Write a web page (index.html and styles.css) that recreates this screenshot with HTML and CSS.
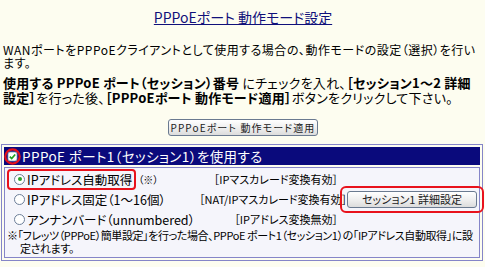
FILE: index.html
```html
<!DOCTYPE html>
<html lang="ja">
<head>
    <meta charset="UTF-8">
    <title>PPPoEポート 動作モード設定</title>
    <link rel="stylesheet" href="styles.css">
</head>
<body>
    <h1 class="page-title"><span>PPPoEポート 動作モード設定</span></h1>

    <p class="intro">WANポートをPPPoEクライアントとして使用する場合の、動作モードの設定（選択）を行います。</p>

    <p class="howto"><b>使用する PPPoE ポート（セッション）番号</b> にチェックを入れ、<b>［セッション1～2 詳細設定］</b>を行った後、<b>［PPPoEポート 動作モード適用］</b>ボタンをクリックして下さい。</p>

    <div class="apply-row">
        <button type="button" class="btn btn-apply">PPPoEポート 動作モード適用</button>
    </div>

    <div class="panel">
        <div class="panel-head">
            <span class="check-ring">
                <svg width="17" height="17" viewBox="0 0 17 17">
                    <circle cx="8.5" cy="8.5" r="7.2" fill="none" stroke="#e8121c" stroke-width="2.2"/>
                    <rect x="4" y="4" width="9" height="9" rx="2" fill="#fff" stroke="#8aa0b8" stroke-width="0.8"/>
                    <path d="M5.8 8.6 L7.7 10.5 L11.2 6.5" fill="none" stroke="#20a020" stroke-width="1.7"/>
                </svg>
            </span>
            <span class="head-text">PPPoE ポート1（セッション1）を使用する</span>
        </div>
        <div class="panel-body">
            <div class="modes">
                <div class="mode">
                    <span class="hilite"><span class="radio on"></span>IPアドレス自動取得</span><span class="mark">（※）</span>
                </div>
                <div class="nat">［IPマスカレード変換有効］</div>
                <div></div>

                <div class="mode">
                    <span class="plain"><span class="radio"></span>IPアドレス固定（1～16個）</span>
                </div>
                <div class="nat">［NAT/IPマスカレード変換有効］</div>
                <div class="detail">
                    <span class="hilite-btn"><button type="button" class="btn btn-detail">セッション1 詳細設定</button></span>
                </div>

                <div class="mode">
                    <span class="plain"><span class="radio"></span>アンナンバード（unnumbered）</span>
                </div>
                <div class="nat">［IPアドレス変換無効］</div>
                <div></div>
            </div>
            <p class="note">※「フレッツ（PPPoE）簡単設定」を行った場合、PPPoE ポート1（セッション1）の「IPアドレス自動取得」に設定されます。</p>
        </div>
    </div>
</body>
</html>
```

FILE: styles.css
```css
body {
    font-family: "Noto Sans CJK JP", sans-serif;
    font-feature-settings: "palt";
    background-color: #fdfdf0;
    color: #000;
    margin: 0;
    padding: 0 2px 0 3px;
    font-size: 12px;
}

.page-title {
    text-align: center;
    font-size: 14px;
    font-weight: normal;
    line-height: 18px;
    margin: 8px 0 0;
    color: #10107a;
}

.page-title span {
    text-decoration: underline;
}

.intro {
    margin: 17px 0 0;
    line-height: 13px;
    letter-spacing: 0.5px;
}

.howto {
    margin: 6px 0 0;
    font-size: 13px;
    line-height: 15px;
    letter-spacing: 0.25px;
}

.apply-row {
    text-align: center;
    margin-top: 13px;
}

.btn {
    font-family: "Noto Sans CJK JP", sans-serif;
    font-feature-settings: "palt";
    font-size: 10px;
    line-height: 13px;
    color: #222;
    white-space: nowrap;
    background: linear-gradient(#ffffff, #ececec 60%, #dcdcdc);
    border: 1px solid #6a7a90;
    border-radius: 3px;
    padding: 1px 0;
}

.btn-apply {
    width: 150px;
    letter-spacing: 1.1px;
}

.panel {
    margin: 8px 0 0 -2px;
    border: 1px solid #8585c8;
    padding: 2px;
    background-color: #fdfdf0;
}

.panel-head {
    display: flex;
    align-items: center;
    height: 18px;
    background-color: #0a0a7c;
    color: #fff;
    font-size: 13.5px;
    letter-spacing: 0.4px;
}

.check-ring {
    display: flex;
    margin-right: 1px;
}

.panel-body {
    margin-top: 2px;
    border: 1px solid #8585c8;
    background-color: #f5f5fb;
    padding: 1px 0 2px 2px;
}

.modes {
    display: grid;
    grid-template-columns: 192px 139px 146px;
    grid-auto-rows: 20px;
    align-items: center;
}

.mode {
    display: flex;
    align-items: center;
    font-size: 12.5px;
    white-space: nowrap;
}

.hilite,
.plain {
    display: inline-flex;
    align-items: center;
    padding: 0 2px 0 5px;
    height: 17px;
    border: 2px solid transparent;
}

.hilite {
    border-color: #e8121c;
    border-radius: 4px;
}

.radio {
    width: 9px;
    height: 9px;
    border: 1px solid #6d7f99;
    border-radius: 50%;
    background: #fff;
    margin-right: 2px;
    position: relative;
}

.radio.on::after {
    content: "";
    position: absolute;
    left: 2.5px;
    top: 2.5px;
    width: 4px;
    height: 4px;
    border-radius: 50%;
    background: #2aa22a;
}

.mark {
    font-size: 10px;
    margin-left: 2px;
}

.nat {
    text-align: right;
    font-size: 11px;
    white-space: nowrap;
}

.detail {
    display: flex;
    justify-content: flex-end;
}

.hilite-btn {
    display: inline-flex;
    border: 2px solid #e8121c;
    border-radius: 6px;
    padding: 3px 5px;
}

.btn-detail {
    width: 130px;
    font-size: 11px;
}

.note {
    margin: 0;
    font-size: 11px;
    line-height: 13px;
    padding-left: 13px;
    text-indent: -13px;
    letter-spacing: -0.4px;
}
```
